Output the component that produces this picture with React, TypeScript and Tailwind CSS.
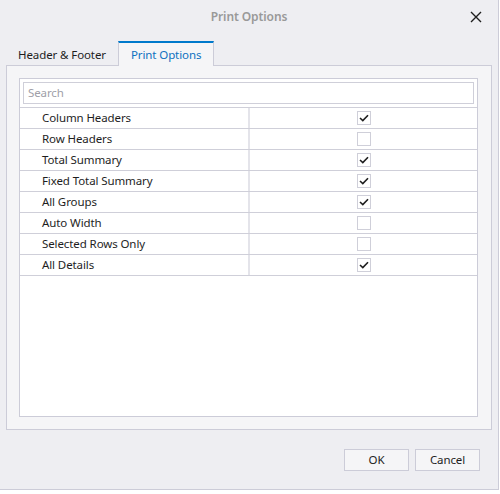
import React from "react";

const rows: [string, boolean][] = [
  ["Column Headers", true],
  ["Row Headers", false],
  ["Total Summary", true],
  ["Fixed Total Summary", true],
  ["All Groups", true],
  ["Auto Width", false],
  ["Selected Rows Only", false],
  ["All Details", true],
];

function Check({ on }: { on: boolean }) {
  return (
    <div className="w-[14px] h-[14px] border border-[#cfcfd9] bg-white flex items-center justify-center">
      {on && (
        <svg width="10" height="8" viewBox="0 0 10 8">
          <path d="M1 4 L3.8 6.6 L9 1.2" fill="none" stroke="#1e1e1e" strokeWidth="1.6" />
        </svg>
      )}
    </div>
  );
}

export default function App() {
  return (
    <div className="w-[500px] h-[494px] bg-white text-[11.5px] tracking-[-0.1px] text-[#1e1e1e]" style={{ fontFamily: '"Noto Sans", "Open Sans", sans-serif' }}>
      <div className="w-[499px] h-[490px] bg-[#eeeef2] border-r border-b border-[#ccccd8] flex flex-col">
        <div className="h-[33px] flex items-center pt-[1px]">
          <div className="w-[40px]" />
          <div className="flex-1 text-center font-semibold text-[#999999] text-[12px]">Print Options</div>
          <div className="w-[40px] flex items-center justify-center pr-[4px]">
            <svg width="12" height="12" viewBox="0 0 12 12">
              <path d="M1 1 L11 11 M11 1 L1 11" stroke="#1e1e1e" strokeWidth="1.4" />
            </svg>
          </div>
        </div>
        <div className="h-[8px]" />
        <div className="flex ml-[6px] h-[25px] relative z-10">
          <div className="px-[12px] flex items-center pt-[2px]">Header &amp; Footer</div>
          <div className="px-[12px] flex items-center bg-[#f5f5f7] border-t-2 border-t-[#007acc] border-x border-x-[#ccccd8] text-[#0e70c0] h-[25px]">Print Options</div>
        </div>
        <div className="mx-[6px] -mt-[1px] h-[365px] border border-[#ccccd8] bg-[#f5f5f7] pt-[12px] pl-[12px] pr-[13px]">
          <div className="h-[339px] border border-[#ccccd8] bg-white">
            <div className="p-[3px]">
              <div className="h-[22px] border border-[#cfcfd9] flex items-center px-[4px] text-[#a0a0a8]">Search</div>
            </div>
            <div className="border-t border-[#cfcfd9]">
              {rows.map(([label, on]) => (
                <div key={label} className="h-[21px] border-b border-[#cfcfd9] flex">
                  <div className="w-[230px] border-r-2 border-[#e4e4ea] pl-[22px] flex items-center">{label}</div>
                  <div className="flex-1 flex items-center justify-center">
                    <Check on={on} />
                  </div>
                </div>
              ))}
            </div>
          </div>
        </div>
        <div className="flex justify-end gap-[6px] pr-[18px] mt-[19px]">
          <div className="w-[65px] h-[22px] border border-[#ccccd8] bg-[#f5f5f7] flex items-center justify-center">OK</div>
          <div className="w-[65px] h-[22px] border border-[#ccccd8] bg-[#f5f5f7] flex items-center justify-center">Cancel</div>
        </div>
      </div>
    </div>
  );
}
